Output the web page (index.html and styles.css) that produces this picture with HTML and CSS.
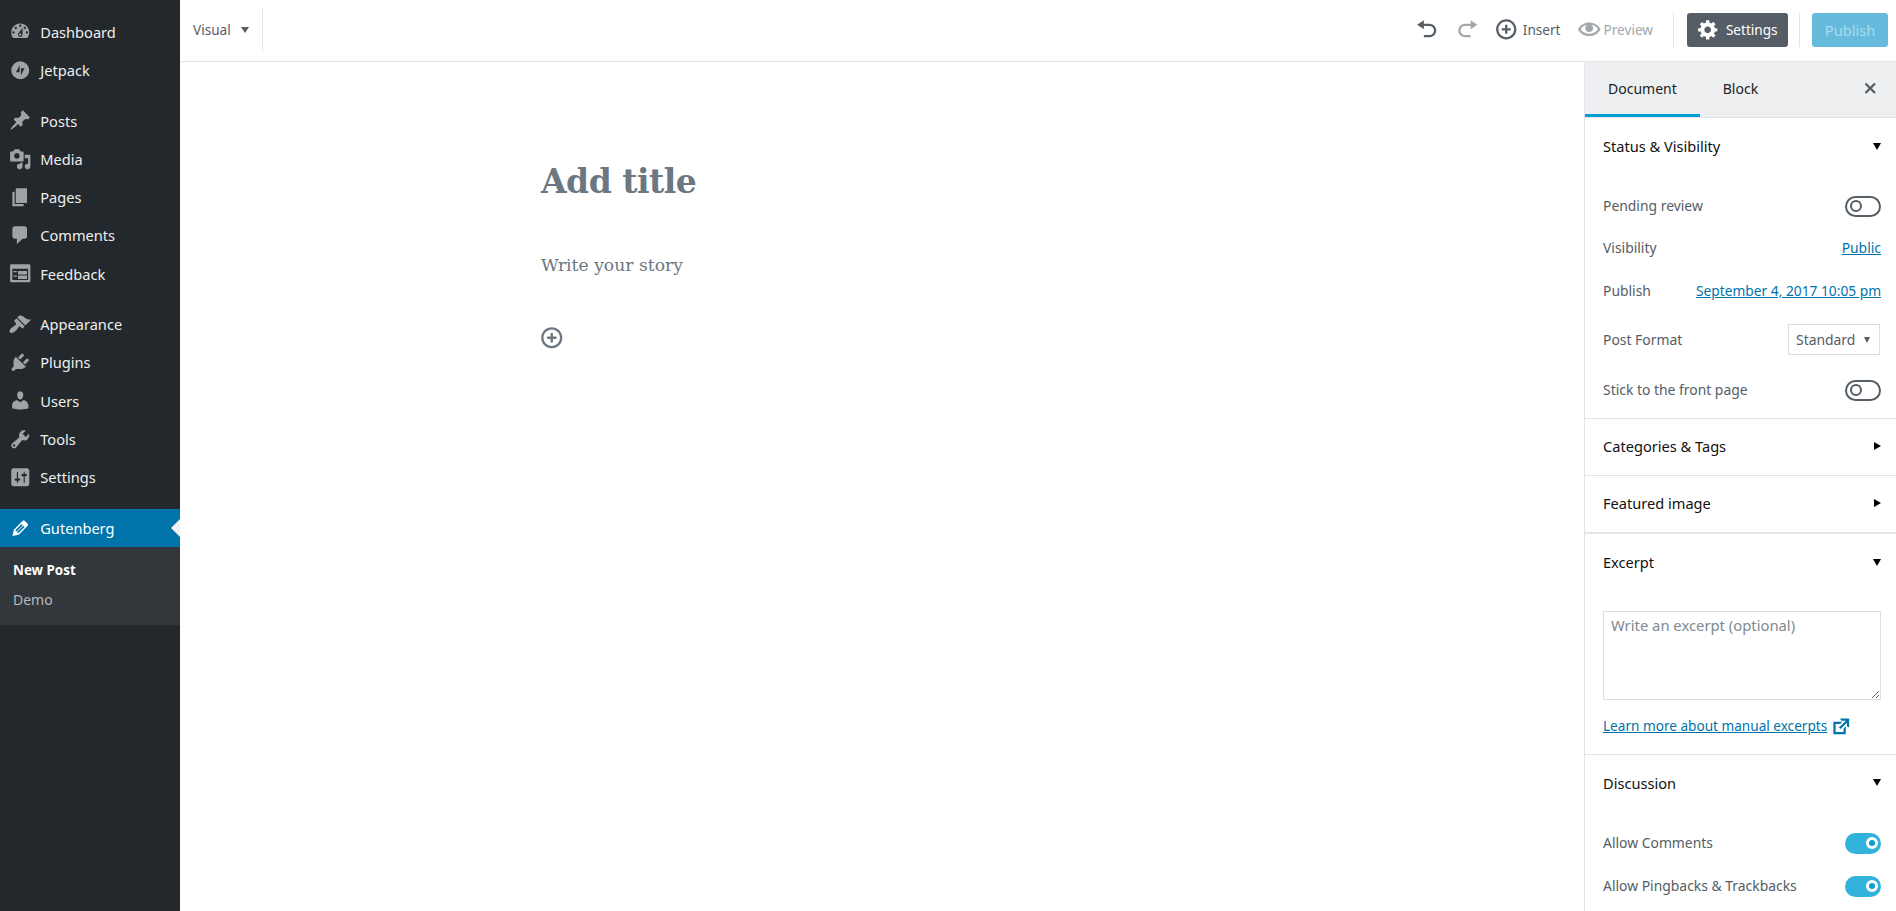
FILE: index.html
```html
<!DOCTYPE html>
<html lang="en">
<head>
<meta charset="utf-8">
<title>Gutenberg</title>
<link rel="stylesheet" href="styles.css">
</head>
<body>
<div class="app">
  <nav class="adminbar">
    <ul class="menu">
      <li class="item"><svg class="micon" viewBox="0 0 20 20"><path d="M3.76 16h12.48c1.1-1.37 1.76-3.11 1.76-5 0-4.42-3.58-8-8-8s-8 3.58-8 8c0 1.89.66 3.63 1.76 5zM10 4c.55 0 1 .45 1 1s-.45 1-1 1-1-.45-1-1 .45-1 1-1zM6 6c.55 0 1 .45 1 1s-.45 1-1 1-1-.45-1-1 .45-1 1-1zm8 0c.55 0 1 .45 1 1s-.45 1-1 1-1-.45-1-1 .45-1 1-1zm-5.37 5.55L12 7v6c0 1.1-.9 2-2 2s-2-.9-2-2c0-.57.24-1.08.63-1.45zM4 10c.55 0 1 .45 1 1s-.45 1-1 1-1-.45-1-1 .45-1 1-1zm12 0c.55 0 1 .45 1 1s-.45 1-1 1-1-.45-1-1 .45-1 1-1zm-5 3c0-.55-.45-1-1-1s-1 .45-1 1 .45 1 1 1 1-.45 1-1z"/></svg>Dashboard</li>
      <li class="item"><svg class="micon" viewBox="0 0 20 20"><path fill-rule="evenodd" d="M10 2a8 8 0 1 0 0 16 8 8 0 0 0 0-16zM9.4 5.5v6.2H6.2zM10.6 14.5V8.3h3.2z"/></svg>Jetpack</li>
      <li class="sep"></li>
      <li class="item"><svg class="micon" viewBox="0 0 20 20"><path d="M10.44 3.02l1.82-1.82 6.36 6.35-1.83 1.82c-1.05-.68-2.48-.57-3.41.36l-.75.75c-.92.93-1.04 2.35-.35 3.41l-1.83 1.82-2.41-2.41-2.8 2.79c-.42.42-3.38 2.71-3.8 2.29s1.86-3.39 2.28-3.81l2.79-2.79L4.1 9.36l1.83-1.82c1.05.69 2.48.57 3.4-.36l.75-.75c.93-.92 1.05-2.35.36-3.41z"/></svg>Posts</li>
      <li class="item"><svg class="micon" viewBox="0 0 20 20"><path d="M13 11V4c0-.55-.45-1-1-1h-1.67L9 1H5L3.67 3H2c-.55 0-1 .45-1 1v7c0 .55.45 1 1 1h10c.55 0 1-.45 1-1zM7 4.5c1.38 0 2.5 1.12 2.5 2.5S8.38 9.5 7 9.5 4.5 8.38 4.5 7 5.62 4.5 7 4.5zM14 6h5v10.5c0 1.38-1.12 2.5-2.5 2.5S14 17.88 14 16.5s1.12-2.5 2.5-2.5c.17 0 .34.02.5.05V9h-3V6zm-4 8.05V13h2v3.5c0 1.38-1.12 2.5-2.5 2.5S7 17.88 7 16.5 8.12 14 9.5 14c.17 0 .34.02.5.05z"/></svg>Media</li>
      <li class="item"><svg class="micon" viewBox="0 0 20 20"><path d="M6 15V2h10v13H6zm-1 1h8v2H3V5h2v11z"/></svg>Pages</li>
      <li class="item"><svg class="micon" viewBox="0 0 20 20"><path d="M5 2h9c1.1 0 2 .9 2 2v7c0 1.1-.9 2-2 2h-2l-5 5v-5H5c-1.1 0-2-.9-2-2V4c0-1.1.9-2 2-2z"/></svg>Comments</li>
      <li class="item"><svg class="micon" viewBox="0 0 20 20"><path fill-rule="evenodd" d="M2 2h16c.55 0 1 .45 1 1v14c0 .55-.45 1-1 1H2c-.55 0-1-.45-1-1V3c0-.55.45-1 1-1zm1 4v10h14V6H3zm1 2h3v1H4zm4 0h8v3H8zm-4 4h3v1H4zm4 0h8v3H8z"/></svg>Feedback</li>
      <li class="sep"></li>
      <li class="item"><svg class="micon" viewBox="0 0 20 20"><path d="M14.48 11.06L7.41 3.99l1.5-1.5c.5-.56 2.3-.47 3.51.32 1.21.8 1.43 1.28 2.91 2.1 1.18.64 2.45 1.26 4.45.85zm-.71.71L6.7 4.7 4.93 6.47c-.39.39-.39 1.02 0 1.41l1.06 1.06c.39.39.39 1.03 0 1.42-.6.6-1.43 1.11-2.21 1.69-.35.26-.7.53-1.01.84C1.43 13.23.4 15.6.4 16.16c0 .53.12.93.42 1.23.3.3.7.43 1.23.43.57 0 2.93-1.04 4.26-2.37.31-.31.58-.66.85-1.02.57-.78 1.08-1.6 1.69-2.21.39-.39 1.02-.39 1.41 0l1.06 1.06c.39.39 1.02.39 1.41 0z"/></svg>Appearance</li>
      <li class="item"><svg class="micon" viewBox="0 0 20 20"><path d="M13.11 4.36L9.87 7.6 8 5.73l3.24-3.24c.35-.34 1.05-.2 1.56.32.52.51.66 1.21.31 1.55zm-8 1.77l.91-1.12 9.01 9.01-1.19.84c-.71.71-2.63 1.16-3.82 1.16H6.14L4.9 17.26c-.59.59-1.54.59-2.12 0-.59-.58-.59-1.53 0-2.12l1.24-1.24v-3.88c0-1.13.4-3.19 1.09-3.89zm7.26 3.97l3.24-3.24c.34-.35 1.04-.21 1.55.31.52.51.66 1.21.31 1.55l-3.24 3.25z"/></svg>Plugins</li>
      <li class="item"><svg class="micon" viewBox="0 0 20 20"><path d="M10 9.25c-2.27 0-2.73-3.44-2.73-3.44C7 4.02 7.82 2 9.97 2c2.16 0 2.98 2.02 2.71 3.81 0 0-.41 3.44-2.68 3.44zm0 2.57L12.72 10c2.39 0 4.52 2.33 4.52 4.53v2.49s-3.65 1.13-7.24 1.13c-3.65 0-7.24-1.13-7.24-1.13v-2.49c0-2.25 1.94-4.48 4.47-4.48z"/></svg>Users</li>
      <li class="item"><svg class="micon" viewBox="0 0 20 20"><path d="M16.68 9.77c-1.34 1.34-3.3 1.67-4.95.99l-5.41 6.52c-.99.99-2.59.99-3.58 0s-.99-2.59 0-3.57l6.52-5.42c-.68-1.65-.35-3.61.99-4.95 1.28-1.28 3.12-1.62 4.72-1.06l-2.89 2.89 2.82 2.82 2.86-2.87c.53 1.58.18 3.39-1.08 4.65zM3.81 16.21c.4.39 1.04.39 1.43 0 .4-.4.4-1.04 0-1.43-.39-.4-1.03-.4-1.43 0-.39.39-.39 1.03 0 1.43z"/></svg>Tools</li>
      <li class="item"><svg class="micon" viewBox="0 0 20 20"><path d="M18 16V4c0-1.1-.9-2-2-2H4c-1.1 0-2 .9-2 2v12c0 1.1.9 2 2 2h12c1.1 0 2-.9 2-2zM8 11h1c.55 0 1 .45 1 1s-.45 1-1 1H8v1.5c0 .28-.22.5-.5.5s-.5-.22-.5-.5V13H6c-.55 0-1-.45-1-1s.45-1 1-1h1V5.5c0-.28.22-.5.5-.5s.5.22.5.5V11zm5-2h-1c-.55 0-1-.45-1-1s.45-1 1-1h1V5.5c0-.28.22-.5.5-.5s.5.22.5.5V7h1c.55 0 1 .45 1 1s-.45 1-1 1h-1v5.5c0 .28-.22.5-.5.5s-.5-.22-.5-.5V9z"/></svg>Settings</li>
      <li class="sep"></li>
      <li class="item current"><svg class="micon" viewBox="0 0 20 20"><path d="M13.89 3.39l2.71 2.72c.46.46.42 1.24.03 1.64l-8.01 8.02-5.56 1.16 1.16-5.58s7.6-7.63 7.99-8.03c.39-.39 1.22-.39 1.68.07zm-2.73 2.79l-5.59 5.61 1.11 1.11 5.54-5.65zm-2.97 8.23l5.58-5.6-1.07-1.08-5.59 5.6z"/></svg>Gutenberg</li>
    </ul>
    <ul class="submenu">
      <li class="sub-active">New Post</li>
      <li class="sub-item">Demo</li>
    </ul>
  </nav>
  <div class="workspace">
    <header class="toolbar">
      <div class="mode">Visual<span class="caret"></span></div>
      <div class="vsep tall"></div>
      <div class="actions">
        <svg class="ticon" viewBox="0 0 20 20"><path d="M12 5H7V2L1 6l6 4V7h5c2.2 0 4 1.8 4 4s-1.8 4-4 4H7v2h5c3.3 0 6-2.7 6-6s-2.7-6-6-6z"/></svg>
        <svg class="ticon dim redo" viewBox="0 0 20 20"><path d="M8 5h5V2l6 4-6 4V7H8c-2.2 0-4 1.8-4 4s1.8 4 4 4h5v2H8c-3.3 0-6-2.7-6-6s2.7-6 6-6z"/></svg>
        <span class="tbtn insert"><svg class="ticon" viewBox="0 0 20 20"><path d="M10 1c-5 0-9 4-9 9s4 9 9 9 9-4 9-9-4-9-9-9zm0 16c-3.9 0-7-3.1-7-7s3.1-7 7-7 7 3.1 7 7-3.1 7-7 7zm1-11H9v3H6v2h3v3h2v-3h3V9h-3V6z"/></svg>Insert</span>
        <span class="tbtn preview"><svg class="ticon dim" viewBox="0 0 20 20"><path d="M19.7 9.4C17.7 6 14 3.9 10 3.9S2.3 6 .3 9.4L0 10l.3.6c2 3.4 5.7 5.5 9.7 5.5s7.7-2.1 9.7-5.5l.3-.6-.3-.6zM10 14.1c-3.1 0-6-1.6-7.7-4.1C3.6 8 5.7 6.6 8 6.1c-.9.6-1.5 1.7-1.5 2.9 0 1.9 1.6 3.5 3.5 3.5s3.5-1.6 3.5-3.5c0-1.2-.6-2.3-1.5-2.9 2.3.5 4.4 1.9 5.7 3.9-1.7 2.5-4.6 4.1-7.7 4.1z"/></svg>Preview</span>
        <div class="vsep first"></div>
        <span class="settings-btn"><svg class="ticon" viewBox="0 0 20 20"><path d="M18 12h-2.18c-.17.7-.44 1.35-.81 1.93l1.54 1.54-2.1 2.1-1.54-1.54c-.58.36-1.23.63-1.91.79V19H8v-2.18c-.68-.16-1.33-.43-1.91-.79l-1.54 1.54-2.12-2.12 1.54-1.54c-.36-.58-.63-1.23-.79-1.91H1V9.03h2.17c.16-.7.44-1.35.8-1.94L2.43 5.55l2.1-2.1 1.54 1.54c.58-.37 1.24-.64 1.93-.81V2h3v2.18c.68.16 1.33.43 1.91.79l1.54-1.54 2.12 2.12-1.54 1.54c.36.59.64 1.24.8 1.94H18V12zm-8.5 1.5c1.66 0 3-1.34 3-3s-1.34-3-3-3-3 1.34-3 3 1.34 3 3 3z"/></svg>Settings</span>
        <div class="vsep second"></div>
        <span class="publish">Publish</span>
      </div>
    </header>
    <div class="body-row">
      <main class="editor">
        <h1 class="title">Add title</h1>
        <p class="story">Write your story</p>
        <svg class="add" viewBox="0 0 20 20"><path d="M10 1c-5 0-9 4-9 9s4 9 9 9 9-4 9-9-4-9-9-9zm0 16c-3.9 0-7-3.1-7-7s3.1-7 7-7 7 3.1 7 7-3.1 7-7 7zm1-11H9v3H6v2h3v3h2v-3h3V9h-3V6z"/></svg>
      </main>
      <aside class="panel">
        <div class="tabs">
          <span class="tab active">Document</span>
          <span class="tab">Block</span>
          <svg class="close" viewBox="0 0 20 20"><path d="M14.95 6.46L11.41 10l3.54 3.54-1.41 1.41L10 11.42l-3.53 3.53-1.42-1.42L8.58 10 5.05 6.47l1.42-1.42L10 8.58l3.54-3.53z"/></svg>
        </div>
        <section class="sec status">
          <div class="sec-head first-head">Status &amp; Visibility<span class="tri down"></span></div>
          <div class="status-grid">
            <div class="row"><span>Pending review</span><span class="toggle"></span></div>
            <div class="row"><span>Visibility</span><a class="lnk">Public</a></div>
            <div class="row"><span>Publish</span><a class="lnk date">September 4, 2017 10:05 pm</a></div>
            <div class="row"><span>Post Format</span><span class="select">Standard<span class="sel-caret"></span></span></div>
            <div class="row"><span>Stick to the front page</span><span class="toggle"></span></div>
          </div>
        </section>
        <section class="sec"><div class="sec-head">Categories &amp; Tags<span class="tri right"></span></div></section>
        <section class="sec thick"><div class="sec-head">Featured image<span class="tri right"></span></div></section>
        <section class="sec excerpt">
          <div class="sec-head excerpt-head">Excerpt<span class="tri down"></span></div>
          <textarea class="ta" placeholder="Write an excerpt (optional)"></textarea>
          <div class="learn"><a class="lnk">Learn more about manual excerpts</a><svg class="ext" viewBox="0 0 20 20"><path d="M9 3h8v8l-2-1V6.92l-5.6 5.59-1.41-1.41L14.08 5H10zm3 12v-3l2-2v7H3V6h8L9 8H5v7h7z"/></svg></div>
        </section>
        <section class="sec discussion">
          <div class="sec-head disc-head">Discussion<span class="tri down"></span></div>
          <div class="row disc-row"><span>Allow Comments</span><span class="toggle on"></span></div>
          <div class="row disc-row"><span>Allow Pingbacks &amp; Trackbacks</span><span class="toggle on"></span></div>
        </section>
      </aside>
    </div>
  </div>
</div>
</body>
</html>
```
FILE: styles.css
```css
*, *::before, *::after { box-sizing: border-box; }
html, body { margin: 0; height: 100%; overflow: hidden; }
body { font: 14.6px/20px "Noto Sans", "Open Sans", sans-serif; color: #555d66; background: #fff; }
ul { list-style: none; margin: 0; padding: 0; }
a { color: inherit; }

.app { display: flex; height: 911px; }

/* admin menu */
.adminbar { width: 180px; flex: none; background: #23282d; padding-top: 13px; color: #eee; }
.item { position: relative; display: flex; align-items: center; height: 38.25px; padding-left: 8.75px; padding-bottom: 1px; }
.micon { width: 22.5px; height: 22.5px; margin-right: 9px; fill: #9ea3a8; flex: none; }
.sep { height: 12.4px; }
.current { background: #0073aa; color: #fff; }
.current .micon { fill: #fff; }
.current::after { content: ""; position: absolute; right: 0; top: 10px; width: 0; height: 0; border: 9px solid transparent; border-left-width: 0; border-right-color: #f1f1f1; }
.submenu { background: #32373c; padding: 8px 0 9px 13px; height: 78px; }
.sub-active { color: #fff; font-size: 13.4px; font-weight: 700; height: 30px; line-height: 30px; }
.sub-item { color: #b4b9be; font-size: 14px; height: 30px; line-height: 30px; }

/* toolbar */
.workspace { flex: 1; display: flex; flex-direction: column; min-width: 0; }
.toolbar { height: 62px; flex: none; display: flex; align-items: center; border-bottom: 1px solid #e2e4e7; padding: 0 8px 2px 13px; font-size: 13.6px; }
.mode { display: flex; align-items: center; }
.caret { width: 0; height: 0; margin-left: 10px; border: 4.5px solid transparent; border-top: 6px solid #555d66; border-bottom: 0; }
.vsep { width: 1px; height: 34px; background: #e2e4e7; flex: none; margin-left: 12px; }
.vsep.tall { height: 42px; margin-left: 13px; }
.vsep.first { margin-left: 20px; }
.vsep.second { margin-left: 11px; }
.actions { margin-left: auto; display: flex; align-items: center; }
.ticon { width: 22.5px; height: 22.5px; fill: #555d66; flex: none; }
.ticon.dim { fill: #a3a8ad; }
.redo { margin-left: 17px; }
.tbtn { display: flex; align-items: center; }
.tbtn .ticon { margin-right: 5px; }
.insert { margin-left: 17px; }
.preview { margin-left: 17.5px; color: #a3a8ad; }
.preview .ticon { margin-right: 3px; }
.settings-btn { display: flex; align-items: center; justify-content: center; gap: 6px; width: 101px; height: 34px; margin-left: 13px; border-radius: 3px; background: #555d66; color: #fff; }
.settings-btn .ticon { fill: #fff; }
.publish { display: flex; align-items: center; justify-content: center; width: 76px; height: 34px; margin-left: 12px; border-radius: 3px; background: #66bbdc; color: #a6dcef; font-size: 14.6px; }

/* editor */
.body-row { flex: 1; display: flex; min-height: 0; }
.editor { flex: 1; padding: 0 0 0 361px; color: #6c7781; }
.title { margin: 0; padding-top: 98px; font: 700 33px/44px "DejaVu Serif", serif; letter-spacing: -0.5px; }
.story { margin: 49px 0 0; font: 17.2px/24px "DejaVu Serif", serif; }
.add { display: block; margin: 49px 0 0 -1px; width: 23.5px; height: 23.5px; fill: #6c7781; }

/* settings panel */
.panel { width: 312px; flex: none; border-left: 1px solid #e2e4e7; overflow: hidden; font-size: 13.9px; }
.tabs { display: flex; align-items: stretch; height: 56px; background: #edeff0; border-bottom: 1px solid #e2e4e7; color: #191e23; position: relative; font-size: 14px; }
.tab { display: flex; align-items: center; padding: 0 23px 2px; height: 55px; }
.tab.active { border-bottom: 3px solid #00a0d2; padding-top: 1px; padding-bottom: 0; }
.close { position: absolute; right: 15px; top: 15px; width: 22.5px; height: 22.5px; fill: #555d66; }
.sec { border-bottom: 1px solid #e2e4e7; }
.sec.thick { border-bottom-width: 2px; }
.sec-head { display: flex; align-items: center; justify-content: space-between; height: 56px; padding: 0 15px 2px 18px; color: #111; font-size: 14.6px; }
.first-head { height: 58px; }
.tri { flex: none; width: 0; height: 0; }
.tri.down { border: 4.5px solid transparent; border-top: 7px solid #000; border-bottom: 0; }
.tri.right { border: 4.5px solid transparent; border-left: 7px solid #000; border-right: 0; }
.status-grid { display: grid; grid-template-rows: 40px 43px 44px 53px 48px; padding: 10px 15px 4px 18px; }
.row { display: flex; align-items: center; justify-content: space-between; }
.lnk { color: #0073aa; text-decoration: underline; }
.date { font-size: 13.75px; }
.toggle { position: relative; width: 36px; height: 21px; border: 2px solid #555d66; border-radius: 11px; flex: none; background: #fff; }
.toggle::after { content: ""; position: absolute; left: 3px; top: 2.5px; width: 12px; height: 12px; border-radius: 50%; border: 2px solid #555d66; background: #fff; }
.toggle.on { border-color: #33b3db; background: #33b3db; }
.toggle.on::after { left: 19px; border: 3px solid #fff; background: #0a9fd0; }
.select { display: flex; align-items: center; justify-content: space-between; width: 92px; height: 31px; margin-right: 1px; padding: 0 9px 0 7px; border: 1px solid #ddd; }
.sel-caret { width: 0; height: 0; border: 3.5px solid transparent; border-top: 6px solid #555d66; border-bottom: 0; }
.excerpt-head { height: 58px; }
.ta { display: block; width: 278px; height: 89px; margin: 19px 0 0 18px; padding: 3px 7px; border: 1px solid #ddd; font: inherit; font-size: 14.8px; color: #555d66; background: #fff; border-radius: 0; outline: 0; }
.ta::placeholder { color: #7e8993; opacity: 1; }
.learn { display: flex; align-items: center; margin-top: 15px; padding: 0 0 16px 18px; font-size: 13.6px; }
.ext { width: 22.5px; height: 22.5px; margin-left: 3px; fill: #0073aa; }
.discussion { border-bottom: 0; }
.disc-head { height: 58px; }
.disc-row { height: 43px; padding: 0 15px 0 18px; }
.disc-head + .disc-row { margin-top: 9px; }
```
